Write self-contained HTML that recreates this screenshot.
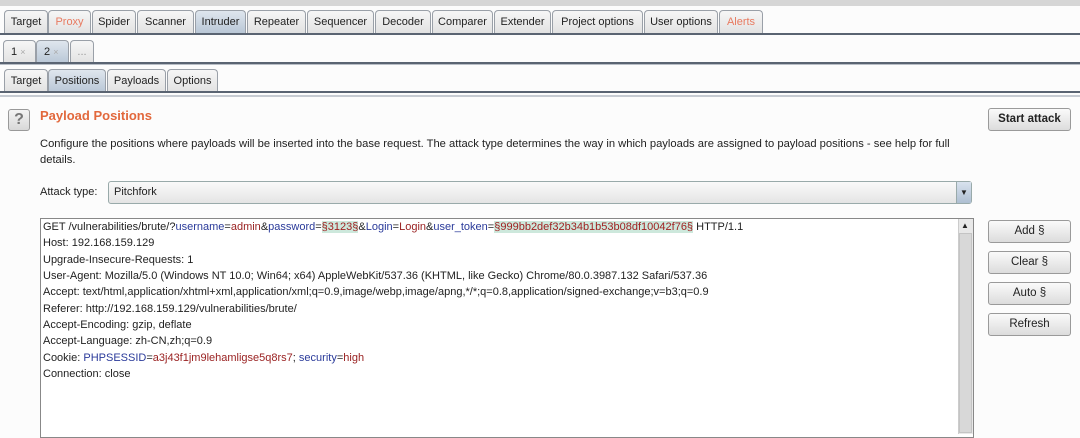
<!DOCTYPE html>
<html><head><meta charset="utf-8"><style>
*{margin:0;padding:0;box-sizing:border-box}
body{width:1080px;height:431px;overflow:hidden;background:#fcfcfc;font-family:"Liberation Sans",sans-serif;font-size:12px;color:#222;position:relative}
.a{position:absolute}
.tab{position:absolute;height:23px;border:1px solid #9aa0a8;border-bottom:none;border-radius:4px 4px 0 0;background:linear-gradient(#f6f6f6,#e2e2e2);text-align:center;line-height:22px;color:#222;font-size:11px}
.sel{background:linear-gradient(#dfe6ee,#b9c7d6)}
.line{position:absolute;left:0;width:1080px;height:2px;background:#5a6472}
.btn{position:absolute;left:988px;width:83px;height:23px;border:1px solid #9a9a9a;border-radius:3px;background:linear-gradient(#fafafa,#dcdcdc);text-align:center;line-height:21px;font-size:11.5px}
.ed{font-size:11px;line-height:16.35px;white-space:pre;color:#222}
.b{color:#2a3a9a}.r{color:#9a2222}.g{color:#a02222;background:#cde8dc}
</style></head><body>
<div class="a" style="left:0;top:0;width:1080px;height:6px;background:#d6d6d6"></div>
<div class="tab" style="left:4px;top:10px;width:44px">Target</div>
<div class="tab" style="left:48px;top:10px;width:43px;color:#e87a60">Proxy</div>
<div class="tab" style="left:92px;top:10px;width:44px">Spider</div>
<div class="tab" style="left:137px;top:10px;width:57px">Scanner</div>
<div class="tab sel" style="left:195px;top:10px;width:51px">Intruder</div>
<div class="tab" style="left:247px;top:10px;width:59px">Repeater</div>
<div class="tab" style="left:307px;top:10px;width:67px">Sequencer</div>
<div class="tab" style="left:375px;top:10px;width:56px">Decoder</div>
<div class="tab" style="left:432px;top:10px;width:61px">Comparer</div>
<div class="tab" style="left:494px;top:10px;width:57px">Extender</div>
<div class="tab" style="left:552px;top:10px;width:91px">Project options</div>
<div class="tab" style="left:644px;top:10px;width:74px">User options</div>
<div class="tab" style="left:719px;top:10px;width:44px;color:#e87a60">Alerts</div>
<div class="line" style="top:33px"></div>
<div class="tab" style="left:3px;top:40px;width:33px;text-align:left;padding-left:7px">1 <span style="color:#aaa;font-size:9px">×</span></div>
<div class="tab sel" style="left:36px;top:40px;width:33px;text-align:left;padding-left:7px">2 <span style="color:#aaa;font-size:9px">×</span></div>
<div class="tab" style="left:70px;top:40px;width:24px;color:#999">...</div>
<div class="line" style="top:62px"></div>
<div class="a" style="left:0;top:64px;width:1080px;height:1px;background:#b8bec6"></div>
<div class="tab" style="left:4px;top:69px;width:44px">Target</div>
<div class="tab sel" style="left:48px;top:69px;width:58px">Positions</div>
<div class="tab" style="left:107px;top:69px;width:59px">Payloads</div>
<div class="tab" style="left:167px;top:69px;width:51px">Options</div>
<div class="line" style="top:91px"></div>
<div class="a" style="left:0;top:95px;width:1080px;height:2px;background:#c6cbd2"></div>
<div class="a" style="left:8px;top:109px;width:22px;height:22px;border:1px solid #999;border-radius:3px;background:linear-gradient(#f4f4f4,#d8d8d8);text-align:center;font-size:16px;font-weight:bold;line-height:20px;color:#777">?</div>
<div class="a" style="left:40px;top:108px;font-size:13px;font-weight:bold;color:#e2683c">Payload Positions</div>
<div class="a" style="left:40px;top:136px;width:930px;font-size:11.2px;line-height:16px">Configure the positions where payloads will be inserted into the base request. The attack type determines the way in which payloads are assigned to payload positions - see help for full details.</div>
<div class="a" style="left:40px;top:186px;font-size:11px">Attack type:</div>
<div class="a" style="left:108px;top:181px;width:864px;height:23px;border:1px solid #9aa;border-radius:3px;background:linear-gradient(#fafafa,#e4e4e4);font-size:11px;line-height:21px;padding-left:5px">Pitchfork</div>
<div class="a" style="left:956px;top:182px;width:15px;height:21px;background:linear-gradient(#d8e2ee,#aebfd2);border-left:1px solid #9aa;font-size:8px;text-align:center;line-height:21px">▼</div>
<div class="btn" style="top:108px;font-weight:bold">Start attack</div>
<div class="a" style="left:40px;top:218px;width:934px;height:220px;border:1px solid #888;background:#fff"></div>
<div class="a" style="left:958px;top:219px;width:15px;height:215px;background:#e8e8e8;border-left:1px solid #ccc"></div>
<div class="a" style="left:961px;top:221px;font-size:8px">▲</div>
<div class="a" style="left:959px;top:233px;width:13px;height:200px;background:#d8d8d8;border:1px solid #c4c4c4"></div>
<div class="a ed" style="left:43px;top:219px">GET /vulnerabilities/brute/?<span class="b">username</span>=<span class="r">admin</span>&amp;<span class="b">password</span>=<span class="g">§3123§</span>&amp;<span class="b">Login</span>=<span class="r">Login</span>&amp;<span class="b">user_token</span>=<span class="g">§999bb2def32b34b1b53b08df10042f76§</span> HTTP/1.1
Host: 192.168.159.129
Upgrade-Insecure-Requests: 1
User-Agent: Mozilla/5.0 (Windows NT 10.0; Win64; x64) AppleWebKit/537.36 (KHTML, like Gecko) Chrome/80.0.3987.132 Safari/537.36
Accept: text/html,application/xhtml+xml,application/xml;q=0.9,image/webp,image/apng,*/*;q=0.8,application/signed-exchange;v=b3;q=0.9
Referer: http://192.168.159.129/vulnerabilities/brute/
Accept-Encoding: gzip, deflate
Accept-Language: zh-CN,zh;q=0.9
Cookie: <span class="b">PHPSESSID</span>=<span class="r">a3j43f1jm9lehamligse5q8rs7</span>; <span class="b">security</span>=<span class="r">high</span>
Connection: close</div>
<div class="btn" style="top:220px">Add §</div>
<div class="btn" style="top:251px">Clear §</div>
<div class="btn" style="top:282px">Auto §</div>
<div class="btn" style="top:313px">Refresh</div>
</body></html>
